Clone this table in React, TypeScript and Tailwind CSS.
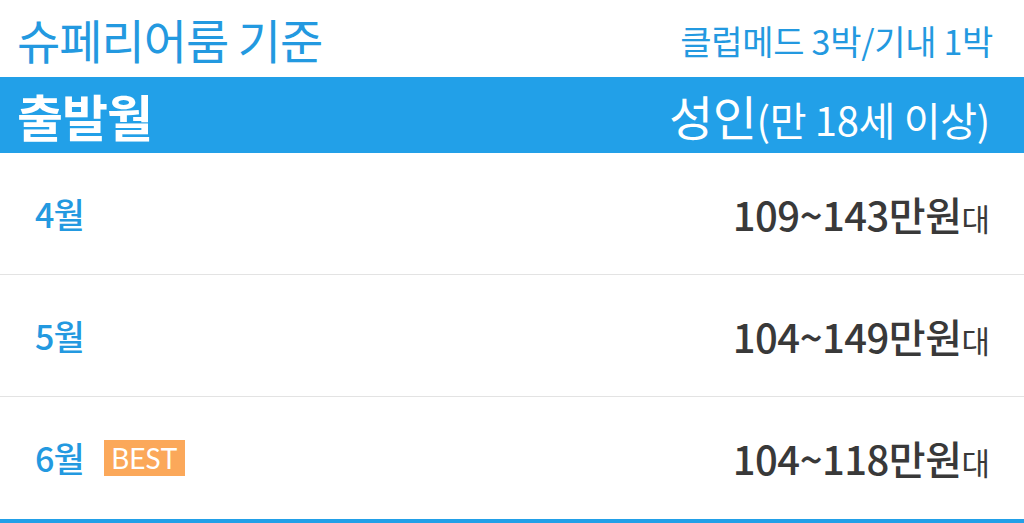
import React from "react";

const font = { fontFamily: '"Noto Sans CJK KR", "Noto Sans", sans-serif' };

const rows = [
  { month: "4월", price: "109~143", best: false },
  { month: "5월", price: "104~149", best: false },
  { month: "6월", price: "104~118", best: true },
];

export default function App() {
  return (
    <div className="w-[1024px] h-[523px] bg-white overflow-hidden" style={font}>
      <div className="h-[77px] flex items-center justify-between pl-[17px] pr-[31px]">
        <div className="text-[47px] leading-none text-[#2399e0] tracking-[-1px]">슈페리어룸 기준</div>
        <div className="text-[34px] leading-none text-[#2399e0] tracking-[-0.3px] pt-1">클럽메드 3박/기내 1박</div>
      </div>
      <div className="h-[76px] bg-[#22a0e8] flex items-center justify-between pl-[17px] pr-[34px] text-white">
        <div className="text-[50px] font-bold leading-none tracking-[-1px]">출발월</div>
        <div className="flex items-baseline leading-none">
          <span className="text-[48px] tracking-[-0.5px]">성인</span>
          <span className="text-[40px] tracking-[-0.3px]">(만 18세 이상)</span>
        </div>
      </div>
      {rows.map((r, i) => (
        <div
          key={r.month}
          className={`flex items-center justify-between pl-[35px] pr-[34px] ${
            i < rows.length - 1 ? "h-[122px] border-b border-[#e3e3e3]" : "h-[126px] border-b-4 border-[#22a0e8]"
          }`}
        >
          <div className="flex items-center gap-[20px]">
            <span className="text-[34px] font-medium text-[#2399e0] leading-none tracking-[-1px]">{r.month}</span>
            {r.best && (
              <span
                className="bg-[#fba85a] text-white text-[28px] leading-none h-[36px] w-[81px] flex items-center justify-center"
                style={{ fontFamily: "Lato, sans-serif" }}
              >
                BEST
              </span>
            )}
          </div>
          <div className="flex items-baseline text-[#393939] leading-none">
            <span className="text-[40px] font-medium tracking-[-0.5px]">{r.price}만원</span>
            <span className="text-[31px]">대</span>
          </div>
        </div>
      ))}
    </div>
  );
}
